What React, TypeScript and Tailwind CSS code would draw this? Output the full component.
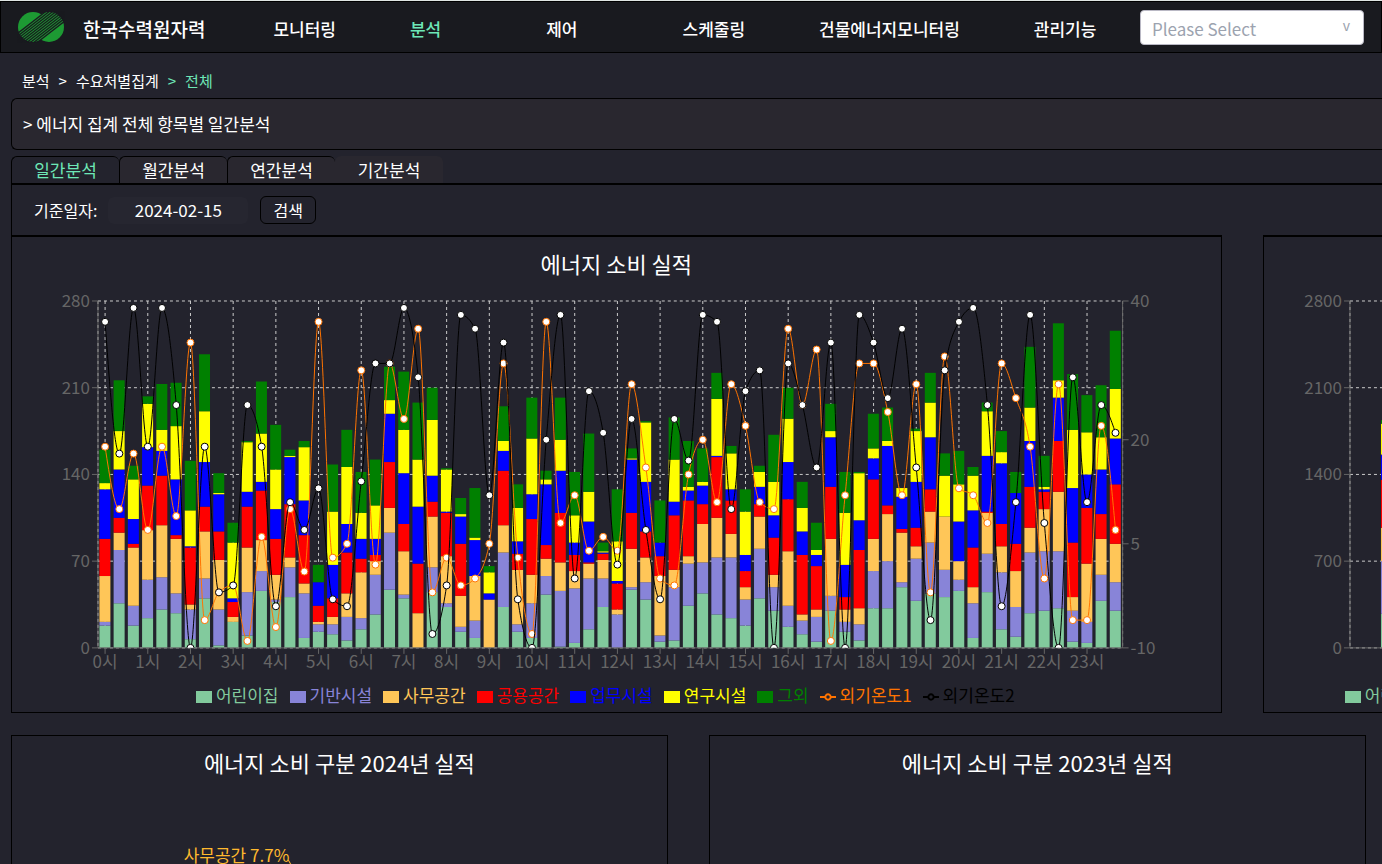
import type { ReactNode } from "react";

const SERIES = [
    { name: "어린이집", color: "#82ca9d" },
    { name: "기반시설", color: "#8884d8" },
    { name: "사무공간", color: "#ffc658" },
    { name: "공용공간", color: "#ff0000" },
    { name: "업무시설", color: "#0000ff" },
    { name: "연구시설", color: "#ffff00" },
    { name: "그외", color: "#008000" },
];

const LINES = [
    { name: "외기온도1", color: "#ff7300" },
    { name: "외기온도2", color: "#000000" },
];

const MENUS = [
    { name: "모니터링", place: "ml-[68px]" },
    { name: "분석", place: "ml-[74px]", active: true },
    { name: "제어", place: "ml-[105px]" },
    { name: "스케줄링", place: "ml-[105px]" },
    { name: "건물에너지모니터링", place: "ml-[74px]" },
    { name: "관리기능", place: "ml-[74px]" },
];

const TABS = ["일간분석", "월간분석", "연간분석", "기간분석"];

// Cumulative usage per 20 minutes, in the order of SERIES
const USAGE = [
    [18, 21, 58, 88, 128, 133, 160], [36, 79, 93, 105, 144, 175, 216], [18, 34, 81, 84, 104, 136, 147],
    [24, 55, 95, 131, 162, 197, 203], [31, 57, 99, 139, 159, 176, 213], [28, 44, 88, 91, 136, 179, 214],
    [7, 31, 35, 81, 82, 111, 151], [40, 56, 94, 114, 150, 191, 237], [2, 31, 71, 94, 124, 125, 141],
    [21, 21, 25, 37, 40, 85, 101], [10, 45, 81, 114, 126, 166, 167], [46, 62, 87, 127, 134, 173, 215],
    [37, 39, 59, 88, 112, 144, 180], [41, 65, 73, 116, 154, 155, 160], [8, 44, 52, 91, 119, 162, 167],
    [13, 19, 21, 34, 53, 53, 67], [11, 19, 25, 40, 67, 110, 148], [6, 25, 44, 77, 100, 146, 176],
    [15, 24, 61, 72, 88, 109, 142], [27, 59, 70, 75, 88, 115, 152], [47, 93, 113, 150, 189, 200, 227],
    [40, 43, 78, 100, 141, 176, 223], [0, 0, 28, 68, 114, 152, 198], [45, 65, 106, 118, 139, 184, 210],
    [33, 36, 74, 109, 110, 144, 145], [13, 17, 42, 84, 106, 108, 121], [8, 22, 58, 58, 87, 89, 129],
    [0, 0, 39, 39, 44, 61, 66], [33, 77, 99, 143, 159, 167, 195], [13, 19, 63, 76, 86, 113, 132],
    [8, 36, 59, 104, 124, 169, 202], [43, 58, 72, 83, 132, 136, 143], [1, 46, 69, 109, 143, 168, 202],
    [4, 48, 62, 75, 85, 107, 142], [15, 56, 68, 69, 102, 126, 173], [33, 56, 71, 76, 77, 78, 85],
    [0, 27, 31, 52, 54, 86, 128], [47, 49, 80, 109, 152, 153, 161], [39, 53, 73, 94, 134, 182, 183],
    [5, 10, 58, 74, 85, 85, 119], [6, 49, 63, 107, 118, 152, 186], [34, 68, 74, 119, 127, 130, 167],
    [44, 69, 100, 116, 131, 134, 161], [27, 73, 105, 154, 155, 201, 222], [24, 73, 92, 119, 128, 157, 163],
    [18, 39, 49, 62, 75, 110, 128], [40, 80, 106, 116, 130, 142, 147], [30, 49, 59, 89, 107, 134, 172],
    [17, 34, 78, 120, 150, 185, 210], [11, 22, 27, 75, 94, 113, 134], [5, 25, 31, 66, 75, 79, 101],
    [30, 42, 88, 130, 170, 175, 197], [13, 21, 31, 41, 67, 109, 142], [6, 19, 32, 79, 103, 141, 142],
    [32, 62, 88, 136, 153, 161, 189], [32, 70, 108, 115, 163, 167, 194], [49, 53, 93, 96, 122, 129, 129],
    [38, 72, 82, 97, 134, 175, 177], [44, 85, 110, 128, 170, 198, 222], [41, 63, 106, 106, 106, 139, 157],
    [46, 55, 70, 70, 102, 132, 159], [8, 36, 49, 81, 111, 139, 146], [45, 76, 109, 110, 155, 191, 198],
    [15, 61, 82, 100, 149, 158, 175], [9, 33, 62, 84, 125, 125, 142], [28, 77, 97, 130, 167, 194, 243],
    [30, 78, 112, 126, 128, 130, 155], [32, 78, 126, 167, 202, 216, 262], [5, 30, 41, 85, 129, 176, 221],
    [4, 21, 68, 113, 140, 174, 204], [38, 59, 88, 108, 144, 170, 212], [30, 53, 84, 132, 169, 209, 256],
];

const TEMP1 = [
    19, 10, 18, 7, 19, 9, 34, -6, -2, -1, -9, 6, -7, 10, 1, 37, 3, 5, 30, 2, 31, 23, 36, -2,
    3, -1, 0, 5, 31, 3, -8, 37, 8, 12, 4, 6, 4, 28, 16, 0, -1, 15, 20, 11, 28, 22, 11, 10,
    36, 25, 33, -9, 12, 31, 31, 24, 12, 28, -2, 32, 13, 12, 8, 31, 26, 19, 0, 28, -6, -6, 22, 7,
];

const TEMP2 = [
    37, 18, 39, 19, 39, 25, -10, 19, -2, -1, 25, 19, -4, 11, 7, 13, -3, -4, 14, 31, 31, 39, 29, -8,
    -1, 38, 36, 12, 34, -3, -10, 20, 38, 0, 27, 21, 2, 23, 7, -3, 23, 17, 38, 37, 10, 27, 30, -10,
    31, 25, 16, 34, -10, 38, 34, 26, 36, 16, -6, 30, 37, 39, 25, -4, 11, 38, 8, -10, 29, 11, 25, 21,
];

// Plot box inside the chart
const LEFT = 86;
const RIGHT = 1111;
const TOP = 18;
const BOTTOM = 365;
const WIDTH = RIGHT - LEFT;
const HEIGHT = BOTTOM - TOP;

const tempY = (t: number) => BOTTOM - ((t + 10) / 50) * HEIGHT;

// Monotone cubic path through evenly spaced points
function monotone(points: number[][]) {
    const n = points.length;
    const h = points[1][0] - points[0][0];
    const slopes = points.slice(1).map((p, i) => (p[1] - points[i][1]) / h);
    const tangents = points.map((_, i) => {
        if (i === 0 || i === n - 1) return 0;
        const a = slopes[i - 1];
        const b = slopes[i];
        if (a * b <= 0) return 0;
        return Math.sign(a) * Math.min(Math.abs(a), Math.abs(b), Math.abs(a + b) / 4) * 2;
    });
    tangents[0] = (3 * slopes[0] - tangents[1]) / 2;
    tangents[n - 1] = (3 * slopes[n - 2] - tangents[n - 2]) / 2;
    let d = `M${points[0][0]},${points[0][1]}`;
    for (let i = 1; i < n; i++) {
        const [x0, y0] = points[i - 1];
        const [x1, y1] = points[i];
        d += `C${x0 + h / 3},${y0 + (tangents[i - 1] * h) / 3},${x1 - h / 3},${y1 - (tangents[i] * h) / 3},${x1},${y1}`;
    }
    return d;
}

function Bars({ data, max, band, size }: { data: number[][]; max: number; band: number; size: number }) {
    return (
        <g>
            {data.map((stack, i) =>
                stack.map((value, s) => {
                    const from = s === 0 ? 0 : stack[s - 1];
                    return (
                        <rect
                            key={`${i}-${s}`}
                            x={LEFT + band * i + band * 0.1}
                            y={BOTTOM - (value / max) * HEIGHT}
                            width={size}
                            height={((value - from) / max) * HEIGHT}
                            fill={SERIES[s].color}
                        />
                    );
                }),
            )}
        </g>
    );
}

function TempLine({ data, color }: { data: number[]; color: string }) {
    const band = WIDTH / data.length;
    const points = data.map((t, i) => [LEFT + band * (i + 0.5), tempY(t)]);

    return (
        <g stroke={color}>
            <path d={monotone(points)} fill="none" />
            {points.map(([x, y], i) => (
                <circle key={i} cx={x} cy={y} r={3.5} fill="#fff" />
            ))}
        </g>
    );
}

function Plot({ max, columns, children }: { max: number; columns: number[]; children: ReactNode }) {
    const rows = [0, 1, 2, 3, 4];

    return (
        <>
            <g stroke="#ccc" strokeDasharray="3 3">
                {rows.map((r) => (
                    <path key={r} d={`M${LEFT},${BOTTOM - (r * HEIGHT) / 4}H${RIGHT}`} />
                ))}
                {[LEFT, ...columns, RIGHT].map((x) => (
                    <path key={x} d={`M${x},${TOP}V${BOTTOM}`} />
                ))}
            </g>
            {children}
            <g stroke="#666" fill="none">
                <path d={`M${LEFT},${TOP}V${BOTTOM}H${RIGHT}V${TOP}`} />
                {rows.map((r) => (
                    <path key={r} d={`M${LEFT - 6},${BOTTOM - (r * HEIGHT) / 4}h6`} />
                ))}
            </g>
            <g fill="#666" textAnchor="end">
                {rows.map((r) => (
                    <text key={r} x={LEFT - 8} y={BOTTOM - (r * HEIGHT) / 4 + 6}>
                        {(max * r) / 4}
                    </text>
                ))}
            </g>
        </>
    );
}

function Legend({ lines, place }: { lines: boolean; place: string }) {
    return (
        <ul className={`flex h-6 items-center gap-[11px] whitespace-nowrap ${place}`}>
            {SERIES.map((s) => (
                <li key={s.name} className="flex items-center gap-1" style={{ color: s.color }}>
                    <svg className="mt-1 h-3 w-4" viewBox="0 0 16 12" aria-hidden="true">
                        <rect width="16" height="12" fill="currentColor" />
                    </svg>
                    {s.name}
                </li>
            ))}
            {lines &&
                LINES.map((l) => (
                    <li key={l.name} className="flex items-center gap-1" style={{ color: l.color }}>
                        <svg className="mt-1 h-4 w-4" viewBox="0 0 32 32" aria-hidden="true">
                            <path
                                d="M0,16h10.7A5.3,5.3,0,1,1,21.3,16H32M21.3,16A5.3,5.3,0,1,1,10.7,16"
                                fill="none"
                                stroke="currentColor"
                                strokeWidth="4"
                            />
                        </svg>
                        {l.name}
                    </li>
                ))}
        </ul>
    );
}

function DailyChart() {
    const band = WIDTH / USAGE.length;
    const hours = Array.from({ length: 24 }, (_, h) => LEFT + band * (h * 3 + 0.5));

    return (
        <svg viewBox="0 0 1209 394" className="block w-full" role="img" aria-label="에너지 소비 실적">
            <clipPath id="plot">
                <rect x={LEFT} y={TOP} width={WIDTH} height={HEIGHT} />
            </clipPath>
            <Plot max={280} columns={hours}>
                <Bars data={USAGE} max={280} band={band} size={11} />
            </Plot>
            <g stroke="#666">
                {hours.map((x) => (
                    <path key={x} d={`M${x},${BOTTOM}v6`} />
                ))}
                {[-10, 5, 20, 40].map((t) => (
                    <path key={t} d={`M${RIGHT},${tempY(t)}h6`} />
                ))}
            </g>
            <g fill="#666">
                {hours.map((x, h) => (
                    <text key={h} x={x} y={BOTTOM + 20} textAnchor="middle">
                        {h}시
                    </text>
                ))}
                {[-10, 5, 20, 40].map((t) => (
                    <text key={t} x={RIGHT + 8} y={tempY(t) + 6}>
                        {t}
                    </text>
                ))}
            </g>
            <g clipPath="url(#plot)">
                <TempLine data={TEMP1} color="#ff7300" />
                <TempLine data={TEMP2} color="#000" />
            </g>
        </svg>
    );
}

function TotalChart() {
    return (
        <svg viewBox="0 0 1209 394" className="block w-full" role="img" aria-label="에너지 소비 합계">
            <Plot max={2800} columns={[]}>
                <Bars data={[[275, 700, 970, 1357, 1560, 1810, 1838]]} max={2800} band={310} size={248} />
            </Plot>
        </svg>
    );
}

function Logo() {
    const stripes = [0, 1, 2, 3, 4, 5, 6, 7, 8, 9];

    return (
        <svg className="h-8 w-12" viewBox="0 0 48 32" aria-hidden="true">
            <g fill="#1d9a33">
                <circle cx="16" cy="16" r="15" />
                <circle cx="32" cy="16" r="15" />
            </g>
            <g stroke="#191a1f" strokeWidth="1.3">
                {stripes.map((s) => (
                    <path key={s} d={`M-4,${26 + s * 2.7}L50,${-16 + s * 2.7}`} />
                ))}
            </g>
        </svg>
    );
}

export default function App() {
    return (
        <div className="min-h-screen overflow-x-hidden border-t border-[#dfe5e3] bg-[#23232d] font-['Noto_Sans_CJK_KR',sans-serif] text-[17px] leading-6 text-white">
            <header className="flex h-[52px] items-center border border-black bg-[#191a1f] pr-[17px] pl-4">
                <Logo />
                <h1 className="ml-[18px] pt-1 text-[19px] font-medium whitespace-nowrap">한국수력원자력</h1>
                <nav className="flex pt-[3px] whitespace-nowrap">
                    {MENUS.map((m) => (
                        <a
                            key={m.name}
                            href="#"
                            className={`font-medium ${m.place} ${m.active ? "text-[#6ee7b7]" : ""}`}
                        >
                            {m.name}
                        </a>
                    ))}
                </nav>
                <div className="relative ml-auto w-56 shrink-0">
                    <select
                        aria-label="건물 선택"
                        className="block h-[35px] w-full appearance-none rounded-sm border border-[#b9b8c4] bg-white px-[11px] pt-[3px] leading-6 text-[#9ca3af]"
                    >
                        <option>Please Select</option>
                    </select>
                    <span className="pointer-events-none absolute top-[5px] right-[14px] text-sm text-[#9ca3af]">v</span>
                </div>
            </header>

            <nav className="mt-4 ml-[22px] flex gap-[9px] text-[15px] leading-6">
                <a href="#">분석</a>
                <span>&gt;</span>
                <a href="#">수요처별집계</a>
                <span className="text-[#6ee7b7]">&gt;</span>
                <a href="#" className="text-[#6ee7b7]">전체</a>
            </nav>

            <main className="ml-[11px]">
                <h2 className="mt-[5px] flex h-[52px] items-center rounded-l-md border border-r-0 border-black bg-[#29272f] px-[11px]">
                    &gt; 에너지 집계 전체 항목별 일간분석
                </h2>

                <div className="mt-[6px] flex h-[27px]">
                    {TABS.map((t, i) => (
                        <button
                            key={t}
                            type="button"
                            className={`w-[108px] rounded-t-md ${i < 3 ? "border-t border-l border-black" : ""} ${i === 0 ? "text-[#6ee7b7]" : "bg-[#29272f]"}`}
                        >
                            {t}
                        </button>
                    ))}
                </div>

                <form className="flex h-[52px] items-center border-t-2 border-l border-black px-[22px]">
                    <label htmlFor="date" className="text-base">기준일자:</label>
                    <input
                        id="date"
                        type="text"
                        defaultValue="2024-02-15"
                        className="ml-[11px] h-[27px] w-[140px] rounded-md bg-[#262630] pb-0.5 text-center"
                    />
                    <button type="button" className="ml-3 h-7 w-14 rounded-md border border-black text-base">
                        검색
                    </button>
                </form>

                <div className="flex gap-[3%]">
                    <section className="w-[88.3%] shrink-0 border border-t-2 border-black">
                        <h3 className="mt-[10px] h-9 text-center text-[22px] leading-8">에너지 소비 실적</h3>
                        <DailyChart />
                        <Legend lines place="mt-[6px] mb-[5px] justify-center pr-[22px]" />
                    </section>
                    <section className="w-[88.3%] shrink-0 border border-t-2 border-black">
                        <h3 className="mt-[10px] h-9 text-center text-[22px] leading-8">에너지 소비 합계</h3>
                        <TotalChart />
                        <Legend lines={false} place="mt-[6px] mb-[5px] ml-[81px]" />
                    </section>
                </div>

                <div className="mt-[22px] flex gap-[3%]">
                    <section className="h-[400px] w-[47.9%] shrink-0 border border-black">
                        <h3 className="mt-[10px] text-center text-[22px] leading-8">에너지 소비 구분 2024년 실적</h3>
                        <svg viewBox="0 0 654 300" className="mt-12 block w-full" role="img" aria-label="2024년 구분">
                            <text x="277" y="36" textAnchor="end" fill="#ffb92e">사무공간 7.7%</text>
                            <path d="M276,34L284,48" stroke="#ffb92e" fill="none" />
                        </svg>
                    </section>
                    <section className="h-[400px] w-[47.9%] shrink-0 border border-black">
                        <h3 className="mt-[10px] text-center text-[22px] leading-8">에너지 소비 구분 2023년 실적</h3>
                    </section>
                </div>
            </main>
        </div>
    );
}
